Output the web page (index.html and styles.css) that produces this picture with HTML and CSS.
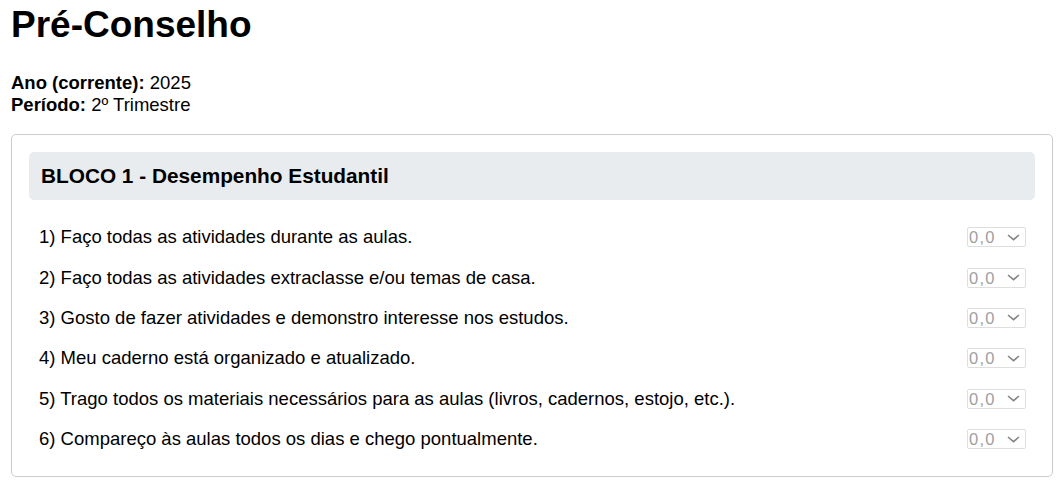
FILE: index.html
```html
<!DOCTYPE html>
<html lang="pt-BR">
<head>
<meta charset="utf-8">
<title>Pré-Conselho</title>
<link rel="stylesheet" href="styles.css">
</head>
<body>
<main class="page">
<h1 class="title">Pré-Conselho</h1>
<div class="info">
  <div><strong>Ano (corrente):</strong> 2025</div>
  <div><strong>Período:</strong> 2º Trimestre</div>
</div>
<section class="card">
  <h2 class="block-title">BLOCO 1 - Desempenho Estudantil</h2>
  <div class="rows">
    <div class="row"><span>1) Faço todas as atividades durante as aulas.</span><select class="grade" disabled><option>0,0</option></select></div>
    <div class="row"><span>2) Faço todas as atividades extraclasse e/ou temas de casa.</span><select class="grade" disabled><option>0,0</option></select></div>
    <div class="row"><span>3) Gosto de fazer atividades e demonstro interesse nos estudos.</span><select class="grade" disabled><option>0,0</option></select></div>
    <div class="row"><span>4) Meu caderno está organizado e atualizado.</span><select class="grade" disabled><option>0,0</option></select></div>
    <div class="row"><span>5) Trago todos os materiais necessários para as aulas (livros, cadernos, estojo, etc.).</span><select class="grade" disabled><option>0,0</option></select></div>
    <div class="row"><span>6) Compareço às aulas todos os dias e chego pontualmente.</span><select class="grade" disabled><option>0,0</option></select></div>
  </div>
</section>
</main>
</body>
</html>
```
FILE: styles.css
```css
body {
  margin: 0;
  font-family: "Liberation Sans", Arial, sans-serif;
  color: #000;
  background: #fff;
}
.page {
  padding: 3px 7px 0 11px;
}
.title {
  font-size: 37px;
  font-weight: bold;
  margin: 0 0 24.5px 0;
  line-height: 44px;
}
.info {
  font-size: 18.5px;
  line-height: 22px;
  margin-bottom: 18.5px;
}
.card {
  border: 1px solid #ccc;
  border-radius: 5px;
  padding: 17px;
}
.block-title {
  margin: 0;
  background: #e9ecef;
  border-radius: 5px;
  font-size: 20.8px;
  font-weight: bold;
  padding: 12px;
  line-height: 24px;
}
.rows {
  margin-top: 17px;
}
.row {
  display: flex;
  align-items: center;
  justify-content: space-between;
  padding: 0 9px 0 10px;
  height: 40.4px;
  font-size: 18.5px;
}
.grade {
  -webkit-appearance: none;
  appearance: none;
  box-sizing: border-box;
  width: 59px;
  height: 20px;
  margin: 0;
  padding: 0 0 0 1px;
  border: 1px solid #dedede;
  border-radius: 2px;
  background: #fff url("data:image/svg+xml,%3Csvg xmlns='http://www.w3.org/2000/svg' width='13' height='7' viewBox='0 0 13 7'%3E%3Cpath d='M1 1l5.5 4.6L12 1' fill='none' stroke='%23858585' stroke-width='1.6'/%3E%3C/svg%3E") no-repeat right 5px center;
  color: #a0a0a0;
  opacity: 1;
  font-family: "Liberation Sans", Arial, sans-serif;
  font-size: 16.5px;
  letter-spacing: 1.2px;
  line-height: 18px;
}
```
